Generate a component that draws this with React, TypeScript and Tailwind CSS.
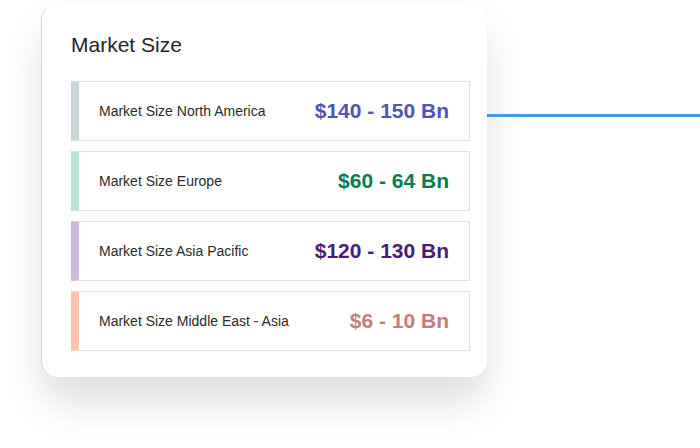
import React from "react";

const rows = [
  { label: "Market Size North America", value: "$140 - 150 Bn", bar: "border-l-[#c8d6d7]", text: "text-[#4e55b6]" },
  { label: "Market Size Europe", value: "$60 - 64 Bn", bar: "border-l-[#b6e3d3]", text: "text-[#097b53]" },
  { label: "Market Size Asia Pacific", value: "$120 - 130 Bn", bar: "border-l-[#cdb9de]", text: "text-[#4a1b78]" },
  { label: "Market Size Middle East - Asia", value: "$6 - 10 Bn", bar: "border-l-[#ffc3ad]", text: "text-[#c47c7c]" },
];

export default function App() {
  return (
    <div
      className="w-[700px] h-[448px] bg-white flex items-start pl-[41px] pt-[4px] overflow-hidden"
      style={{ fontFamily: '"Liberation Sans", Arial, sans-serif' }}
    >
      <div className="w-[446px] shrink-0 bg-white rounded-2xl border-l border-l-[#b8e3ea] pl-[29px] pr-[17px] pt-[29px] pb-[26px] shadow-[0_26px_44px_rgba(0,0,0,0.13)]">
        <h2 className="text-[21px] leading-[24px] text-[#252525] font-normal">Market Size</h2>
        <div className="mt-[24px] flex flex-col gap-[10px]">
          {rows.map((r) => (
            <div
              key={r.label}
              className={`h-[60px] flex items-center justify-between border border-[#e2e2e2] border-l-[8px] ${r.bar} pl-[20px] pr-[20px]`}
            >
              <span className="text-[14px] text-[#2a2a2a]">{r.label}</span>
              <span className={`text-[21px] font-bold ${r.text}`}>{r.value}</span>
            </div>
          ))}
        </div>
      </div>
      <div className="flex-1 h-[3px] mt-[110px] bg-[#4299e9]" />
    </div>
  );
}
